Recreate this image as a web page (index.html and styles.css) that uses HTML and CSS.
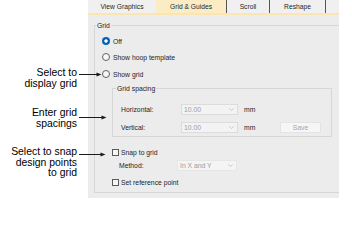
FILE: index.html
```html
<!DOCTYPE html>
<html>
<head>
<meta charset="utf-8">
<link rel="stylesheet" href="styles.css">
</head>
<body>
<div class="stage">
  <div class="panel">
    <div class="tabs">
      <div class="tab t1">View Graphics</div>
      <div class="tab t2 active">Grid &amp; Guides</div>
      <div class="tab t3">Scroll</div>
      <div class="tab t4">Reshape</div>
    </div>
    <div class="body">
      <fieldset class="group outer">
        <legend class="legend">Grid</legend>
        <div class="row r-off"><span class="radio on"></span><span>Off</span></div>
        <div class="row r-hoop"><span class="radio"></span><span>Show hoop template</span></div>
        <div class="row r-grid"><span class="radio"></span><span>Show grid</span></div>
        <fieldset class="group inner">
          <legend class="legend">Grid spacing</legend>
          <div class="frow">
            <span class="flabel">Horizontal:</span>
            <span class="combo"><span class="val">10.00</span><svg class="chev" width="5" height="3" viewBox="0 0 5 3"><path d="M0.3 0.3 L2.5 2.5 L4.7 0.3" fill="none" stroke="#b9b9b9" stroke-width="0.7"/></svg></span>
            <span class="unit">mm</span>
          </div>
          <div class="frow r2">
            <span class="flabel">Vertical:</span>
            <span class="combo"><span class="val">10.00</span><svg class="chev" width="5" height="3" viewBox="0 0 5 3"><path d="M0.3 0.3 L2.5 2.5 L4.7 0.3" fill="none" stroke="#b9b9b9" stroke-width="0.7"/></svg></span>
            <span class="unit">mm</span>
            <span class="btn">Save</span>
          </div>
        </fieldset>
        <div class="row check r-snap"><span class="cbox"></span><span>Snap to grid</span></div>
        <div class="row r-method">
          <span class="mlabel">Method:</span>
          <span class="combo wide"><span class="val">In X and Y</span><svg class="chev" width="5" height="3" viewBox="0 0 5 3"><path d="M0.3 0.3 L2.5 2.5 L4.7 0.3" fill="none" stroke="#b9b9b9" stroke-width="0.7"/></svg></span>
        </div>
        <div class="row check r-ref"><span class="cbox"></span><span>Set reference point</span></div>
      </fieldset>
    </div>
  </div>

  <div class="callout c1">Select to<br>display grid</div>
  <div class="callout c2">Enter grid<br>spacings</div>
  <div class="callout c3">Select to snap<br>design points<br>to grid</div>

  <svg class="arrows" width="352" height="216" viewBox="0 0 352 216">
    <g stroke="#1a1a1a" stroke-width="1" fill="none">
      <line x1="79" y1="74.5" x2="98" y2="74.5"/>
      <line x1="79" y1="117.5" x2="103" y2="117.5"/>
      <line x1="79" y1="154.5" x2="102" y2="154.5"/>
    </g>
    <g fill="#1a1a1a">
      <polygon points="96.5,72.5 101.5,74.5 96.5,76.5"/>
      <polygon points="101.5,115.5 106.5,117.5 101.5,119.5"/>
      <polygon points="100.5,152.5 105.5,154.5 100.5,156.5"/>
    </g>
  </svg>
</div>
</body>
</html>
```

FILE: styles.css
```css
html, body {
  margin: 0;
  padding: 0;
  background: #ffffff;
}

.stage {
  position: relative;
  width: 352px;
  height: 216px;
  overflow: hidden;
  background: #ffffff;
  font-family: "Liberation Sans", Arial, sans-serif;
}

.panel {
  margin-left: 88px;
  width: 251px;
  height: 198px;
  background: #ececec;
  overflow: hidden;
  font-size: 6.8px;
  color: #1e1e1e;
}

.tabs {
  display: flex;
  height: 13px;
  background: #f0f0f0;
  border-bottom: 2px solid #fbe6b2;
}

.tab {
  box-sizing: border-box;
  height: 13px;
  line-height: 13px;
  text-align: center;
  font-size: 6.7px;
  color: #262626;
  white-space: nowrap;
}

.t1 { width: 68px; }
.t2 { width: 71px; border-right: 1px solid #555; }
.t3 { width: 43px; border-right: 1px solid #555; }
.t4 { width: 56px; border-right: 1px solid #555; }

.tab.active {
  background: #fcecc4;
}

.body {
  padding: 6px 0 5px 0;
}

.group {
  margin: 0;
  border: 1px solid #d7d7d7;
  min-width: 0;
}

.legend {
  font-size: 6.8px;
  line-height: 9px;
  padding: 0 1px;
  color: #1e1e1e;
}

.outer {
  margin-left: 6px;
  width: 250px;
  box-sizing: border-box;
  padding: 3px 0 3px 7px;
}

.outer > .legend {
  margin-left: -6px;
}

.row {
  display: flex;
  align-items: center;
  white-space: nowrap;
}

.r-off { height: 16px; }
.r-hoop { height: 16px; }
.r-grid { height: 18px; }

.radio {
  box-sizing: border-box;
  width: 8px;
  height: 8px;
  border-radius: 50%;
  border: 1px solid #626262;
  background: #f7f7f7;
  margin-right: 3px;
  flex: none;
}

.radio.on {
  border: none;
  background: radial-gradient(circle, #ffffff 0 1.4px, #0a62b6 1.9px);
}

.inner {
  margin: 1px 0 0 10px;
  width: 220px;
  box-sizing: border-box;
  padding: 10px 0 3px 8px;
}

.inner > .legend {
  margin-left: -5px;
}

.frow {
  display: flex;
  align-items: center;
  height: 12px;
}

.frow.r2 {
  margin-top: 6px;
}

.flabel {
  width: 60px;
  flex: none;
}

.combo {
  box-sizing: border-box;
  display: flex;
  align-items: center;
  width: 57px;
  height: 11px;
  border: 1px solid #dcdcdc;
  background: #f3f3f3;
  color: #9c9c9c;
  flex: none;
}

.combo .val {
  padding-left: 2px;
}

.combo .chev {
  margin-left: auto;
  margin-right: 3px;
}

.combo.wide {
  width: 60px;
  border-color: #e6e6e6;
  background: #f4f4f4;
}

.unit {
  margin-left: 6px;
  width: 36px;
  flex: none;
}

.btn {
  box-sizing: border-box;
  width: 41px;
  height: 11px;
  line-height: 9px;
  text-align: center;
  border: 1px solid #e4e4e4;
  background: #f6f6f6;
  color: #a6a6a6;
  flex: none;
}

.check {
  padding-left: 10px;
  height: 14px;
}

.r-snap { margin-top: 8px; }
.r-ref { margin-top: 4px; }

.cbox {
  box-sizing: border-box;
  width: 7px;
  height: 7px;
  border: 1px solid #5a5a5a;
  background: #f6f6f6;
  margin-right: 2px;
  flex: none;
}

.r-method {
  height: 12px;
  padding-left: 17px;
}

.mlabel {
  width: 58px;
  flex: none;
}

.callout {
  position: absolute;
  left: 0;
  width: 77px;
  text-align: right;
  font-size: 10.4px;
  line-height: 10.5px;
  color: #000000;
  white-space: nowrap;
}

.c1 { top: 68px; }
.c2 { top: 108px; }
.c3 { top: 147px; }

.arrows {
  position: absolute;
  left: 0;
  top: 0;
  pointer-events: none;
}
```
